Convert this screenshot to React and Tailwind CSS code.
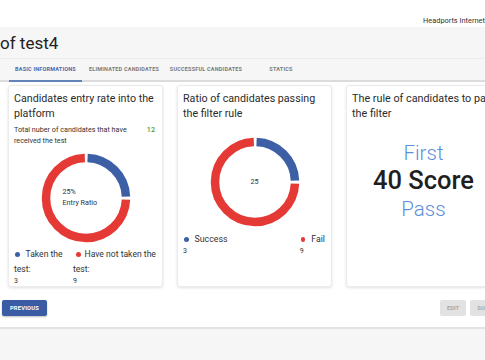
import React from "react";

function Donut({ size = 92, children }) {
  const r = 40;
  const c = 2 * Math.PI * r;
  const blue = c * 0.25;
  const gap = 1.6;
  return (
    <div className="relative" style={{ width: size, height: size }}>
      <svg width={size} height={size} viewBox="0 0 92 92">
        <g transform="rotate(-90 46 46)">
          <circle
            cx="46"
            cy="46"
            r={r}
            fill="none"
            stroke="#3d5fa6"
            strokeWidth="8.5"
            strokeDasharray={`${blue - 2 * gap} ${c}`}
            strokeDashoffset={-gap}
          />
          <circle
            cx="46"
            cy="46"
            r={r}
            fill="none"
            stroke="#e53935"
            strokeWidth="8.5"
            strokeDasharray={`${c - blue - 2 * gap} ${c}`}
            strokeDashoffset={-(blue + gap)}
          />
        </g>
      </svg>
      {children}
    </div>
  );
}

function Card({ children, className = "" }) {
  return (
    <div
      className={
        "w-[155px] shrink-0 h-[202px] bg-white rounded-[3px] border border-[#ececec] shadow-[0_1px_3px_rgba(0,0,0,0.12)] " +
        className
      }
    >
      {children}
    </div>
  );
}

export default function App() {
  return (
    <div
      className="w-[485px] h-[360px] overflow-hidden bg-white"
      style={{ fontFamily: "Roboto, 'Liberation Sans', sans-serif" }}
    >
      <div className="w-[512px] flex flex-col">
        {/* top bar */}
        <div className="h-[27px] bg-white flex items-center pl-[423px] pt-[14px]">
          <span className="text-[7.4px] text-[#333] whitespace-nowrap">
            Headports Internet Technology
          </span>
        </div>
        {/* title */}
        <div className="h-[31px] bg-[#f6f6f6] flex items-center">
          <span className="text-[17px] text-[#222] leading-none pt-[2px]">of test4</span>
        </div>
        {/* tabs */}
        <div className="h-[24px] bg-[#f6f6f6] border-t border-[#ececec] border-b-2 border-b-[#dcdcdc] flex items-stretch pl-[9px] text-[5.5px] font-bold tracking-[0.2px] whitespace-nowrap">
          <div className="w-[73px] flex items-center justify-center text-[#4a68a8] border-b-2 border-[#6482ba] -mb-[2px]">
            BASIC INFORMATIONS
          </div>
          <div className="w-[84px] flex items-center justify-center text-[#7a7a7a]">
            ELIMINATED CANDIDATES
          </div>
          <div className="w-[80px] flex items-center justify-center text-[#7a7a7a]">
            SUCCESSFUL CANDIDATES
          </div>
          <div className="w-[70px] flex items-center justify-center text-[#7a7a7a]">
            STATICS
          </div>
        </div>

        {/* cards */}
        <div className="flex gap-[14px] pl-[8px] mt-[3px]">
          <Card className="px-[5px] pt-[5px] flex flex-col">
            <div className="text-[10.7px] leading-[15px] text-[#2b2b2b]">
              Candidates entry rate into the platform
            </div>
            <div className="flex justify-between items-start mt-[3px] text-[7.2px] leading-[11px] text-[#333]">
              <span className="w-[120px]">Total nuber of candidates that have received the test</span>
              <span className="text-[#43a047] font-medium pr-[2px]">12</span>
            </div>
            <div className="h-[1.5px] bg-[#d0d0d0] mt-[4px]" />
            <div className="flex justify-center mt-[2px]">
              <Donut>
                <div className="absolute left-[23px] top-[34px] text-[7.2px] leading-[11px] text-[#333]">
                  <div>25%</div>
                  <div>Entry Ratio</div>
                </div>
              </Donut>
            </div>
            <div className="flex mt-[3px] text-[8.6px] leading-[15px] text-[#333]">
              <div className="w-[59px] shrink-0">
                <div>
                  <span className="inline-block w-[4.5px] h-[4.5px] rounded-full bg-[#3d5fa6] mr-[6px] ml-[1px] align-middle" />
                  Taken the test:
                </div>
                <div className="text-[7px] leading-[9px]">3</div>
              </div>
              <div className="flex-1">
                <div>
                  <span className="inline-block w-[4.5px] h-[4.5px] rounded-full bg-[#e53935] mr-[4px] ml-[3px] align-middle" />
                  Have not taken the test:
                </div>
                <div className="text-[7px] leading-[9px]">9</div>
              </div>
            </div>
          </Card>

          <Card className="px-[5px] pt-[5px] flex flex-col">
            <div className="text-[10.7px] leading-[15px] text-[#2b2b2b]">
              Ratio of candidates passing the filter rule
            </div>
            <div className="flex justify-center mt-[15px]">
              <Donut>
                <div className="absolute inset-0 flex items-center justify-center text-[7.2px] text-[#333]">
                  25
                </div>
              </Donut>
            </div>
            <div className="flex justify-between mt-[4px] text-[8.8px] leading-[15px] text-[#333]">
              <div>
                <div>
                  <span className="inline-block w-[4.5px] h-[4.5px] rounded-full bg-[#3d5fa6] mr-[6px] ml-[1px] align-middle" />
                  Success
                </div>
                <div className="text-[7px] leading-[9px]">3</div>
              </div>
              <div className="pr-[1px]">
                <div>
                  <span className="inline-block w-[4.5px] h-[4.5px] rounded-full bg-[#e53935] mr-[6px] align-middle" />
                  Fail
                </div>
                <div className="text-[7px] leading-[9px] -ml-[1px]">9</div>
              </div>
            </div>
          </Card>

          <Card className="px-[5px] pt-[5px] flex flex-col">
            <div className="text-[10.8px] leading-[15px] text-[#2b2b2b] whitespace-nowrap">
              The rule of candidates to pass
            </div>
            <div className="text-[10.8px] leading-[15px] text-[#2b2b2b]">the filter</div>
            <div className="flex flex-col items-center mt-[18px] leading-none">
              <div className="text-[20.5px] font-light text-[#5b8ede] h-[28px] flex items-center">First</div>
              <div className="text-[25.5px] font-medium text-[#1f1f1f] h-[28px] flex items-center">40 Score</div>
              <div className="text-[20.5px] font-light text-[#5b8ede] h-[28px] flex items-center">Pass</div>
            </div>
          </Card>
        </div>

        {/* buttons */}
        <div className="flex justify-between items-center mt-[13px] pl-[2px] pr-[6px] h-[16px]">
          <button className="h-[16px] w-[45px] rounded-[2px] bg-[#3b5ba5] text-white text-[5.8px] font-bold tracking-[0.2px] shadow-[0_1px_2px_rgba(0,0,0,0.25)]">
            PREVIOUS
          </button>
          <div className="flex gap-[4px]">
            <button className="h-[16px] w-[26px] rounded-[2px] bg-[#e2e2e2] text-[#a8a8a8] text-[5.8px] font-bold">
              EDIT
            </button>
            <button className="h-[16px] w-[36px] rounded-[2px] bg-[#e2e2e2] text-[#a8a8a8] text-[5.8px] font-bold">
              SUBMIT
            </button>
          </div>
        </div>

        <div className="mt-[11px] border-t-2 border-[#e2e2e2] h-[40px] bg-[#f6f6f6]" />
      </div>
    </div>
  );
}
